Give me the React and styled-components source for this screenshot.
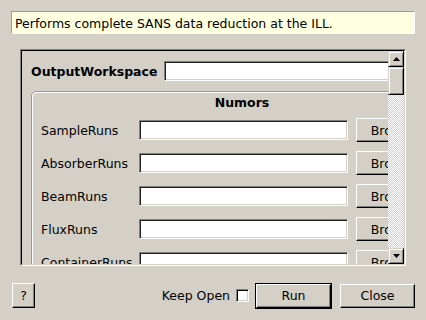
import React from 'react';
import styled, { createGlobalStyle } from 'styled-components';

/* ========== STYLES ========== */
const GlobalStyle = createGlobalStyle`
  html, body {
    margin: 0;
    padding: 0;
    background: #d4d0c8;
  }
  body {
    font-family: 'DejaVu Sans', 'Liberation Sans', sans-serif;
    font-size: 12.5px;
    color: #000;
  }
`;

const Dialog = styled.div`
  width: 426px;
  height: 320px;
  box-sizing: border-box;
  padding: 11px 11px 0 11px;
  display: flex;
  flex-direction: column;
  background: #d4d0c8;
`;

const Description = styled.div`
  height: 23px;
  box-sizing: border-box;
  background: #ffffe1;
  border: 1px solid;
  border-color: #a09c94 #ffffff #ffffff #a09c94;
  padding: 1px 0 0 3px;
  line-height: 21px;
  white-space: nowrap;
  width: 404px;
`;

const ScrollFrame = styled.div`
  margin: 15px 0 0 9px;
  width: 386px;
  height: 217px;
  box-sizing: border-box;
  border: 1px solid;
  border-color: #808080 #ffffff #ffffff #808080;
  display: flex;
`;

const ScrollInner = styled.div`
  flex: 1;
  display: flex;
  border: 1px solid;
  border-color: #000 #d4d0c8 #d4d0c8 #000;
  overflow: hidden;
`;

const Viewport = styled.div`
  flex: 1;
  overflow: hidden;
`;

const Content = styled.div`
  width: 460px;
  padding: 10px 0 0 9px;
`;

const TopRow = styled.div`
  display: flex;
  align-items: center;
  height: 20px;
`;

const BoldLabel = styled.span`
  font-weight: bold;
  width: 133px;
`;

const Field = styled.div`
  width: ${(p) => p.width}px;
  height: 20px;
  box-sizing: border-box;
  background: #fff;
  border: 1px solid;
  border-color: #808080 #ffffff #ffffff #808080;
  box-shadow: inset 1px 1px 0 #202020, inset -1px -1px 0 #d4d0c8;
`;

const GroupBox = styled.fieldset`
  margin: 10px 0 0 0;
  padding: 0 0 0 9px;
  width: 420px;
  border: 1px solid #9c9890;
  border-radius: 5px;
  box-shadow: inset 1px 1px 0 #ffffff, 1px 1px 0 #ffffff;
  min-width: 0;
`;

const GroupTitle = styled.legend`
  display: block;
  float: left;
  padding: 3px 0 0 0;
  margin-left: -9px;
  width: 420px;
  text-align: center;
  font-weight: bold;
  line-height: 16px;
`;

const Rows = styled.div`
  clear: both;
  display: flex;
  flex-direction: column;
  gap: 9px;
  padding-top: 7px;
`;

const Row = styled.div`
  display: flex;
  align-items: center;
  height: 24px;
`;

const RowLabel = styled.span`
  width: 98px;
`;

const RaisedButton = styled.button`
  font-family: 'DejaVu Sans', 'Liberation Sans', sans-serif;
  font-size: 12.5px;
  color: #000;
  background: #d4d0c8;
  box-sizing: border-box;
  width: ${(p) => p.width}px;
  height: ${(p) => p.height || 24}px;
  padding: 0;
  border: 1px solid;
  border-color: #ffffff #000 #000 #ffffff;
  box-shadow: inset -1px -1px 0 #808080;
  outline: ${(p) => (p.isDefault ? '1px solid #000' : 'none')};
  margin-left: ${(p) => p.gap || 0}px;
  flex-shrink: 0;
`;

const ScrollBar = styled.div`
  width: 16px;
  display: flex;
  flex-direction: column;
`;

const ArrowButton = styled.div`
  width: 16px;
  height: 16px;
  box-sizing: border-box;
  background: #d4d0c8;
  border: 1px solid;
  border-color: #d4d0c8 #000 #000 #d4d0c8;
  box-shadow: inset 1px 1px 0 #fff, inset -1px -1px 0 #808080;
  display: flex;
  align-items: center;
  justify-content: center;
`;

const Slider = styled(ArrowButton)`
  height: 28px;
`;

const Track = styled.div`
  flex: 1;
  background-color: #d4d0c8;
  background-image: conic-gradient(#ffffff 25%, #d4d0c8 0 50%, #ffffff 0 75%, #d4d0c8 0);
  background-size: 2px 2px;
`;

const Footer = styled.div`
  display: flex;
  align-items: center;
  margin-top: 17px;
  padding-left: 1px;
`;

const KeepOpen = styled.label`
  margin-left: auto;
  display: flex;
  align-items: center;
  gap: 6px;
`;

const CheckBox = styled.span`
  width: 13px;
  height: 13px;
  box-sizing: border-box;
  background: #fff;
  border: 1px solid;
  border-color: #808080 #ffffff #ffffff #808080;
  box-shadow: inset 1px 1px 0 #000, inset -1px -1px 0 #d4d0c8;
`;

/* ========== COMPONENT ========== */
const Arrow = ({ up }) => (
  <svg width="7" height="4" viewBox="0 0 7 4">
    <path d={up ? 'M3.5 0 L7 4 L0 4 Z' : 'M0 0 L7 0 L3.5 4 Z'} fill="#000" />
  </svg>
);

const runFields = ['SampleRuns', 'AbsorberRuns', 'BeamRuns', 'FluxRuns', 'ContainerRuns'];

const App = () => (
  <>
    <GlobalStyle />
    <Dialog>
      <Description>Performs complete SANS data reduction at the ILL.</Description>
      <ScrollFrame>
        <ScrollInner>
          <Viewport>
            <Content>
              <TopRow>
                <BoldLabel>OutputWorkspace</BoldLabel>
                <Field width={240} />
              </TopRow>
              <GroupBox>
                <GroupTitle>Numors</GroupTitle>
                <Rows>
                  {runFields.map((name) => (
                    <Row key={name}>
                      <RowLabel>{name}</RowLabel>
                      <Field width={209} />
                      <RaisedButton width={75} gap={8}>
                        Browse
                      </RaisedButton>
                    </Row>
                  ))}
                </Rows>
              </GroupBox>
            </Content>
          </Viewport>
          <ScrollBar>
            <ArrowButton>
              <Arrow up />
            </ArrowButton>
            <Slider />
            <Track />
            <ArrowButton>
              <Arrow />
            </ArrowButton>
          </ScrollBar>
        </ScrollInner>
      </ScrollFrame>
      <Footer>
        <RaisedButton width={23} height={25}>
          ?
        </RaisedButton>
        <KeepOpen>
          Keep Open
          <CheckBox />
        </KeepOpen>
        <RaisedButton width={75} height={24} gap={7} isDefault>
          Run
        </RaisedButton>
        <RaisedButton width={75} height={24} gap={9}>
          Close
        </RaisedButton>
      </Footer>
    </Dialog>
  </>
);

export default App;
